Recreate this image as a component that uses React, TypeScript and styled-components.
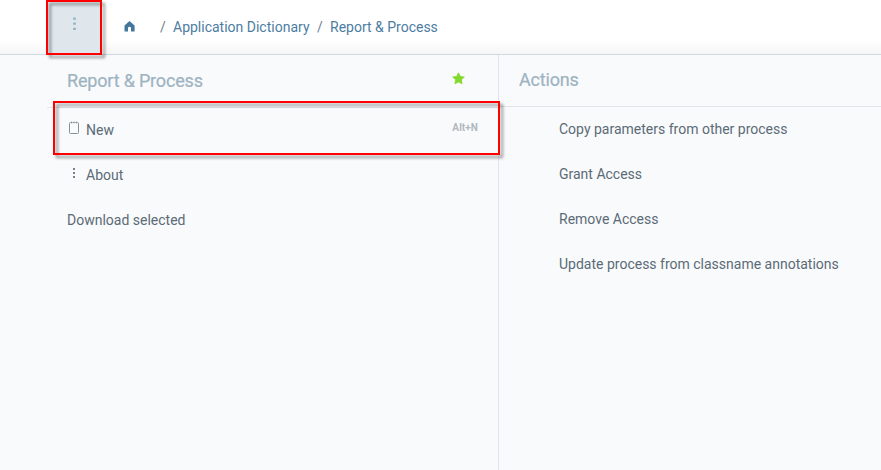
import React from "react";
import styled, { createGlobalStyle } from "styled-components";

const GlobalStyle = createGlobalStyle`
  * { box-sizing: border-box; }
  body { margin: 0; background: #f9fafc; font-family: Roboto, sans-serif; font-size: 14px; }
`;

const Page = styled.div`
  width: 881px;
  height: 470px;
  display: flex;
  flex-direction: column;
  overflow: hidden;
  background: #f9fafc;
  color: #5b6b76;
`;

const Header = styled.header`
  height: 55px;
  flex: none;
  display: flex;
  padding-left: 47px;
  background: linear-gradient(#fff 0, #fff 40px, #f6f6f6 54px);
  border-bottom: 1px solid #d0d9e0;
`;

const MenuButton = styled.div`
  position: relative;
  width: 54px;
  height: 54px;
  padding: 17px 0 0 25px;
  background: #dfe7ec;
  color: #8fafc2;
`;

const Highlight = styled.div<{ $top: number; $left: number; $width: number; $height: number }>`
  position: absolute;
  z-index: 2;
  top: ${(p) => p.$top}px;
  left: ${(p) => p.$left}px;
  width: ${(p) => p.$width}px;
  height: ${(p) => p.$height}px;
  border: 2px solid #fe0000;
  filter: drop-shadow(3px 3px 1.5px rgba(0, 0, 0, 0.42));
  pointer-events: none;
`;

const Breadcrumb = styled.nav`
  display: flex;
  align-items: flex-start;
  color: #4c7da1;
  line-height: 20px;
  padding-top: 17px;
  white-space: pre;
`;

const HomeIcon = styled.svg`
  display: block;
  margin: 4px 25px 0 23px;
`;

const Crumb = styled.span<{ $width: number }>`
  width: ${(p) => p.$width}px;
`;

const Separator = styled.span`
  width: 13px;
  color: #6b7f8d;
`;

const Panels = styled.main`
  flex: 1;
  display: grid;
  grid-template-columns: 451px 1fr;
  padding-left: 47px;
`;

const Panel = styled.section<{ $divided?: boolean }>`
  position: relative;
  border-right: ${(p) => (p.$divided ? "1px solid #dfe5ea" : "0")};
  width: ${(p) => (p.$divided ? "452px" : "auto")};
  margin-left: ${(p) => (p.$divided ? "0" : "1px")};
`;

const PanelTitle = styled.div<{ $height: number }>`
  height: ${(p) => p.$height}px;
  display: flex;
  justify-content: space-between;
  padding: ${(p) => p.$height - 40}px 33px 0 20px;
  border-bottom: 1px solid #e0e6eb;
  color: #9db3c1;
  font-size: 18px;
  line-height: 26px;
  letter-spacing: -0.18px;
  -webkit-text-stroke: 0.2px #9db3c1;
`;

const Star = styled.svg`
  display: block;
  margin-top: 4px;
`;

const Row = styled.div<{ $indent: number }>`
  height: 45px;
  display: flex;
  align-items: center;
  padding: 0 20px 2px ${(p) => p.$indent}px;
`;

const RowIcon = styled.svg`
  display: block;
  width: 14px;
  height: 14px;
  margin: -3px 5px 0 0;
  flex: none;
`;

const Shortcut = styled.span`
  margin: -4px 0 0 auto;
  color: #b0b8bd;
  font-size: 10px;
  font-weight: 700;
  letter-spacing: 0.08px;
`;

const actions = [
  "Copy parameters from other process",
  "Grant Access",
  "Remove Access",
  "Update process from classname annotations",
];

export default function App() {
  return (
    <>
      <GlobalStyle />
      <Page>
        <Header>
          <MenuButton>
            <svg width="5" height="14" fill="currentColor" display="block">
              <rect x="1.2" y="0.5" width="2.6" height="2.2" rx=".5" />
              <rect x="1.2" y="5.6" width="2.6" height="2.2" rx=".5" />
              <rect x="1.2" y="10.7" width="2.6" height="2.2" rx=".5" />
            </svg>
            <Highlight $top={0} $left={-1} $width={56} $height={55} />
          </MenuButton>
          <Breadcrumb>
            <HomeIcon width="11" height="11" viewBox="0 0 11 11" fill="#44779c">
              <path d="M5.5 0 10.6 4.6V10.5H7V7.2Q7 5.8 5.5 5.8T4 7.2V10.5H.5V4.6Z" />
            </HomeIcon>
            <Separator>/</Separator>
            <Crumb $width={144}>Application Dictionary</Crumb>
            <Separator>/</Separator>
            <Crumb $width={110}>Report &amp; Process</Crumb>
          </Breadcrumb>
        </Header>
        <Panels>
          <Panel $divided>
            <PanelTitle $height={53}>
              Report &amp; Process
              <Star width="13" height="13" viewBox="0 0 13 13" fill="#82d92b">
                <path
                  d="m6.5.8 1.8 3.6 4 .6-2.9 2.8.7 4-3.6-1.9-3.6 1.9.7-4L.7 5l4-.6Z"
                  stroke="#82d92b"
                  strokeWidth=".8"
                  strokeLinejoin="round"
                />
              </Star>
            </PanelTitle>
            <Row $indent={20}>
              <RowIcon viewBox="0 0 14 14" fill="none" stroke="#84929b">
                <path d="M4 1.5H3.5Q2.5 1.5 2.5 2.5V11.5Q2.5 12.5 3.5 12.5H10.5Q11.5 12.5 11.5 11.5V2.5Q11.5 1.5 10.5 1.5H10" />
                <path d="M4 1.5h6" strokeOpacity=".65" />
                <path d="M4.5.5v2M7 .5v2M9.5.5v2" strokeWidth=".8" />
              </RowIcon>
              New
              <Shortcut>Alt+N</Shortcut>
            </Row>
            <Row $indent={20}>
              <RowIcon viewBox="0 0 14 14" fill="#74828c">
                <path d="M6 2h2v2H6zM6 6h2v2H6zM6 10h2v2H6z" />
              </RowIcon>
              About
            </Row>
            <Row $indent={20}>Download selected</Row>
            <Highlight $top={46} $left={6} $width={447} $height={54} />
          </Panel>
          <Panel>
            <PanelTitle $height={52}>Actions</PanelTitle>
            {actions.map((label) => (
              <Row key={label} $indent={60}>
                {label}
              </Row>
            ))}
          </Panel>
        </Panels>
      </Page>
    </>
  );
}
